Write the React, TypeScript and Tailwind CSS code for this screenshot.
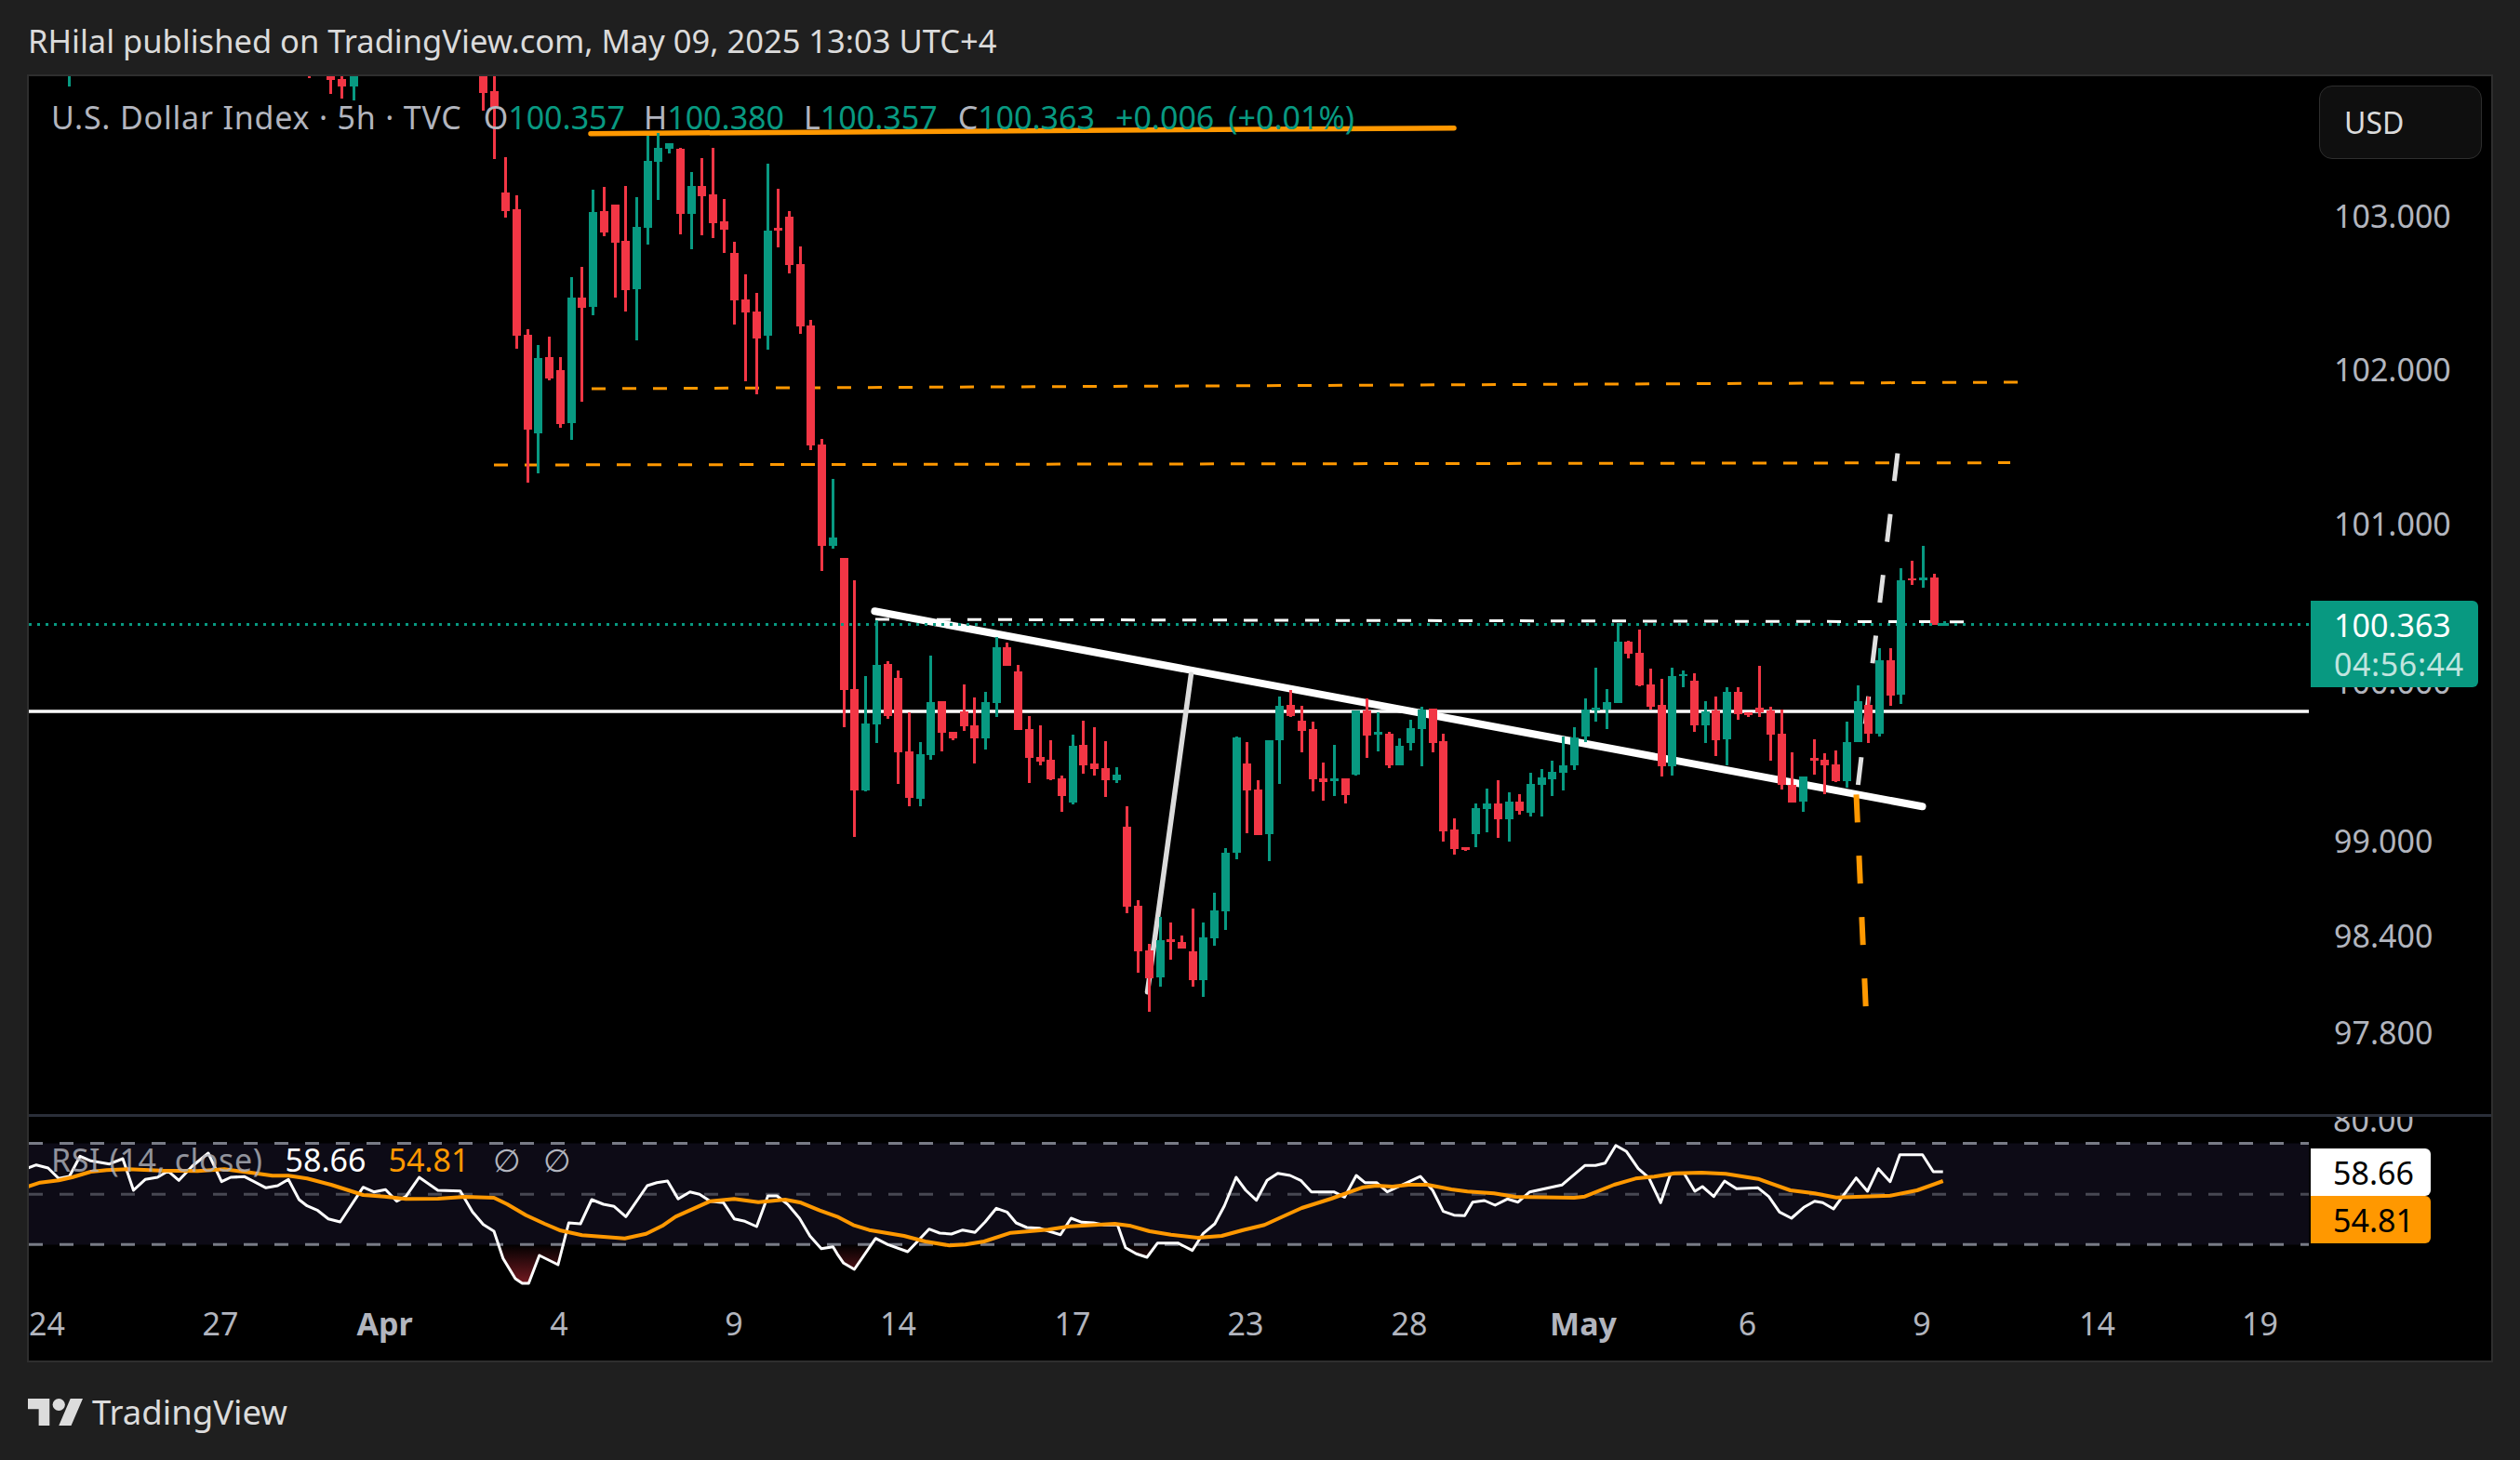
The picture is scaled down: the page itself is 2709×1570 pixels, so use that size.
type Candle = [number, number, number, number, 'r' | 'g'];

const RED = '#f23645';
const TEAL = '#089981';
const ORANGE = '#ff9800';

// cut off at the top of the pane: [x, wick top, wick bottom, body top, body bottom, colour]
const early: [number, number, number, number, number, 'r' | 'g'][] = [
  [74, 70, 93, 70, 70, 'g'],
  [332, 70, 84, 70, 70, 'r'],
  [355, 70, 101, 70, 86, 'r'],
  [367, 70, 106, 85, 93, 'r'],
  [380, 70, 108, 70, 93, 'g'],
  [519, 70, 119, 70, 100, 'r'],
  [531, 70, 171, 98, 115, 'r'],
];

// [wick top, wick bottom, body top, body bottom, colour], one bar every 11.72px from x=543
const candles: Candle[] = [
  [169, 234, 207, 227, 'r'], [210, 375, 225, 361, 'r'], [354, 519, 360, 462, 'r'], [371, 509, 385, 466, 'g'],
  [362, 409, 384, 407, 'r'], [384, 460, 398, 456, 'r'], [298, 473, 320, 455, 'g'], [287, 432, 320, 331, 'r'],
  [204, 339, 228, 330, 'g'], [201, 254, 227, 250, 'r'], [220, 320, 220, 261, 'r'], [200, 335, 259, 312, 'r'],
  [212, 366, 244, 311, 'g'], [146, 263, 173, 245, 'g'], [143, 215, 159, 174, 'g'], [154, 165, 154, 160, 'g'],
  [159, 252, 160, 230, 'r'], [185, 268, 200, 230, 'g'], [170, 253, 200, 211, 'r'], [159, 256, 209, 240, 'r'],
  [214, 272, 238, 247, 'r'], [260, 349, 272, 323, 'r'], [295, 410, 322, 336, 'r'], [315, 424, 335, 364, 'r'],
  [176, 376, 248, 361, 'g'], [203, 266, 245, 248, 'r'], [227, 294, 233, 285, 'r'], [265, 359, 284, 351, 'r'],
  [344, 484, 350, 479, 'r'], [472, 614, 478, 587, 'r'], [515, 590, 578, 587, 'g'], [600, 782, 600, 742, 'r'],
  [624, 900, 741, 850, 'r'], [727, 851, 778, 850, 'g'], [667, 799, 715, 779, 'g'], [711, 773, 714, 770, 'r'],
  [721, 843, 729, 809, 'r'], [766, 867, 808, 858, 'r'], [798, 867, 811, 859, 'g'], [705, 817, 755, 812, 'g'],
  [754, 808, 754, 788, 'r'], [787, 796, 787, 794, 'r'], [736, 786, 765, 781, 'r'], [750, 821, 780, 794, 'r'],
  [744, 806, 755, 794, 'g'], [685, 771, 696, 756, 'g'], [691, 716, 696, 716, 'r'], [715, 785, 722, 785, 'r'],
  [770, 842, 784, 815, 'r'], [780, 823, 814, 819, 'r'], [796, 839, 817, 838, 'r'], [834, 873, 837, 856, 'r'],
  [790, 865, 802, 863, 'g'], [775, 832, 801, 823, 'r'], [782, 834, 821, 827, 'r'], [797, 857, 826, 839, 'r'],
  [825, 842, 833, 839, 'g'], [867, 982, 889, 975, 'r'], [968, 1046, 974, 1023, 'r'], [1015, 1088, 1022, 1052, 'r'],
  [986, 1061, 1011, 1051, 'g'], [992, 1032, 1010, 1013, 'r'], [1006, 1020, 1013, 1020, 'r'], [977, 1061, 1023, 1054, 'r'],
  [992, 1072, 1008, 1054, 'g'], [960, 1017, 979, 1009, 'g'], [912, 1000, 917, 980, 'g'], [792, 924, 793, 917, 'g'],
  [798, 896, 821, 850, 'r'], [839, 898, 849, 898, 'r'], [796, 926, 796, 897, 'g'], [749, 843, 759, 796, 'g'],
  [742, 771, 758, 770, 'r'], [759, 809, 775, 786, 'r'], [776, 851, 784, 838, 'r'], [820, 861, 837, 841, 'r'],
  [801, 856, 837, 840, 'g'], [837, 864, 837, 855, 'r'], [764, 834, 764, 833, 'g'], [751, 815, 764, 791, 'r'],
  [766, 808, 787, 790, 'g'], [787, 826, 789, 823, 'r'], [794, 823, 802, 823, 'g'], [774, 807, 783, 799, 'g'],
  [760, 824, 763, 784, 'g'], [762, 809, 762, 799, 'r'], [789, 905, 797, 894, 'r'], [880, 919, 892, 913, 'r'],
  [911, 915, 911, 914, 'r'], [864, 911, 869, 897, 'g'], [848, 895, 864, 870, 'g'], [839, 901, 864, 881, 'r'],
  [852, 905, 862, 881, 'g'], [854, 876, 862, 872, 'r'], [831, 878, 843, 874, 'g'], [827, 878, 836, 844, 'g'],
  [818, 856, 830, 838, 'g'], [792, 850, 823, 831, 'g'], [782, 828, 793, 823, 'g'], [751, 798, 763, 792, 'g'],
  [718, 776, 761, 764, 'g'], [741, 784, 755, 763, 'g'], [670, 756, 690, 756, 'g'], [689, 708, 690, 703, 'r'],
  [677, 738, 702, 737, 'r'], [719, 763, 736, 760, 'r'], [730, 835, 758, 824, 'r'], [718, 834, 727, 824, 'g'],
  [721, 739, 725, 727, 'g'], [724, 787, 732, 780, 'r'], [754, 799, 765, 780, 'g'], [749, 813, 764, 796, 'r'],
  [739, 823, 744, 795, 'g'], [739, 774, 744, 768, 'r'], [766, 771, 766, 769, 'r'], [716, 771, 761, 766, 'r'],
  [760, 818, 764, 790, 'r'], [763, 849, 789, 844, 'r'], [809, 863, 844, 863, 'r'], [835, 873, 835, 862, 'g'],
  [795, 833, 815, 818, 'r'], [810, 854, 817, 823, 'r'], [807, 841, 822, 840, 'r'], [776, 847, 798, 840, 'g'],
  [737, 798, 754, 798, 'g'], [749, 799, 758, 789, 'r'], [697, 792, 710, 789, 'g'], [697, 759, 710, 748, 'r'],
  [611, 757, 624, 747, 'g'], [603, 629, 622, 624, 'r'], [587, 632, 621, 624, 'g'], [617, 671, 621, 672, 'r'],
  [668, 673, 670, 673, 'g'],
];

// rsi traces, sampled per stretch of the pane
const seg = (pts: number[][], sx: number, ox: number) => pts.map(([x, y]) => [x / sx + ox, y / 3 + 1180]);

const rsi = [
  ...seg([[52,228],[68,218],[90,228],[110,262],[130,255],[150,190],[170,205],[205,215],[230,198],[250,300],[272,265],[295,258],[315,238],[335,268],[360,222],[390,180],[415,272],[432,258],[458,256],[498,292],[520,285],[540,265],[560,330],[575,350],[595,365],[615,392],[637,402],[680,290],[700,305],[722,298],[743,335],[760,320],[785,258],[820,300],[862,302],[885,370],[905,410],[925,432],[942,520],[965,585],[978,600],[990,600],[1010,510],[1045,540],[1065,405],[1087,408],[1108,330],[1130,345],[1150,352],[1172,385],[1212,285],[1230,275],[1250,270],[1270,328],[1292,305],[1310,313],[1330,335],[1355,340],[1375,392],[1395,400],[1417,417],[1438,318],[1455,318],[1475,345],[1497,390],[1517,448],[1538,488],[1560,482]], 1.742, 0),
  ...seg([[0,505],[12,535],[32,555],[72,455],[95,475],[132,498],[172,425],[192,438],[214,441],[235,428],[258,436],[277,402],[298,358],[318,370],[335,405],[355,420],[378,422],[418,443],[438,390],[458,403],[480,405],[500,412],[525,412],[540,485],[560,505],[580,516],[600,470],[638,470],[665,494],[685,440],[707,408],[725,350],[747,258],[765,300],[785,332],[805,268],[825,245],[848,252],[868,268],[888,305],[930,305],[950,322],[972,252],[988,275],[1010,275],[1030,305],[1092,255],[1115,300],[1135,368],[1155,380],[1175,382],[1190,338],[1212,333],[1232,348],[1255,328],[1275,338],[1297,305],[1357,283],[1400,220],[1420,220],[1438,212],[1458,155],[1478,175],[1500,230],[1520,260],[1542,340],[1560,250]], 1.742, 900),
  ...seg([[0,245],[18,245],[38,303],[52,288],[73,320],[93,270],[115,295],[155,292],[175,320],[195,370],[217,390],[240,355],[260,335],[275,340],[295,360],[337,260],[358,303],[378,230],[400,272],[418,185],[460,185],[480,240],[498,240]], 1.725, 1800),
];

const rsiMa = [
  ...seg([[52,288],[75,275],[110,268],[135,258],[170,240],[200,235],[240,232],[300,236],[370,238],[420,232],[470,243],[510,253],[540,253],[575,262],[620,282],[680,315],[720,320],[760,328],[820,327],[870,321],[925,324],[950,345],[985,380],[1020,408],[1050,430],[1090,445],[1130,450],[1170,455],[1210,440],[1240,415],[1265,385],[1300,358],[1330,335],[1375,328],[1420,338],[1470,330],[1500,340],[1535,365]], 1.742, 0),
  ...seg([[0,385],[30,412],[60,428],[125,447],[165,465],[210,478],[240,475],[275,465],[325,437],[395,427],[435,416],[520,408],[550,415],[585,432],[625,443],[675,453],[720,447],[760,428],[800,412],[840,380],[870,357],[925,327],[985,290],[1010,285],[1040,288],[1070,282],[1105,282],[1150,297],[1180,304],[1230,310],[1270,321],[1380,324],[1400,320],[1455,282],[1495,262],[1530,256]], 1.742, 900),
  ...seg([[0,245],[50,243],[95,247],[155,263],[215,300],[260,310],[300,323],[400,317],[450,300],[498,270]], 1.725, 1800),
];

const toPoints = (pts: number[][]) => pts.map(([x, y]) => `${x.toFixed(1)},${y.toFixed(1)}`).join(' ');

const prices = [
  { y: 232, text: '103.000' },
  { y: 397, text: '102.000' },
  { y: 563, text: '101.000' },
  { y: 733, text: '100.000' },
  { y: 904, text: '99.000' },
  { y: 1006, text: '98.400' },
  { y: 1110, text: '97.800' },
];

const dates = [
  { x: 50.5, text: '24' }, { x: 237, text: '27' }, { x: 413.5, text: 'Apr', bold: true }, { x: 601, text: '4' },
  { x: 789, text: '9' }, { x: 965.5, text: '14' }, { x: 1153, text: '17' }, { x: 1339, text: '23' },
  { x: 1515, text: '28' }, { x: 1702, text: 'May', bold: true }, { x: 1878.5, text: '6' }, { x: 2066, text: '9' },
  { x: 2254.5, text: '14' }, { x: 2429.5, text: '19' },
];

function Bar({ x, wt, wb, bt, bb, c }: { x: number; wt: number; wb: number; bt: number; bb: number; c: 'r' | 'g' }) {
  const fill = c === 'r' ? RED : TEAL;
  const px = Math.round(x);
  return (
    <g fill={fill}>
      <rect x={px - 1} y={wt} width={3} height={wb - wt} />
      <rect x={px - 4} y={bt} width={9} height={Math.max(bb - bt, 1)} />
    </g>
  );
}

function PriceChart() {
  return (
    <svg width="2451" height="1116" viewBox="31 82 2451 1116" className="block">
      <line x1="31" y1="765" x2="2482" y2="765" stroke="#fff" strokeWidth="3.5" />
      <line x1="635" y1="143.7" x2="1563" y2="137.7" stroke={ORANGE} strokeWidth="5.5" strokeLinecap="round" />
      <line x1="636" y1="418" x2="2170" y2="411" stroke={ORANGE} strokeWidth="3" strokeDasharray="15 18" />
      <line x1="531" y1="500" x2="2161" y2="497.6" stroke={ORANGE} strokeWidth="3" strokeDasharray="15 18" />
      <line x1="941" y1="666" x2="2111" y2="668.7" stroke="#fff" strokeWidth="3" strokeDasharray="15 18" />
      <line x1="940.4" y1="657.3" x2="2066.5" y2="867.3" stroke="#fff" strokeWidth="8" strokeLinecap="round" />
      <line x1="1280.4" y1="725.3" x2="1233.5" y2="1066.7" stroke="#dcdcdc" strokeWidth="5.5" strokeLinecap="round" />
      <line x1="1997.4" y1="844" x2="2040" y2="487" stroke="#e0e0e0" strokeWidth="5" strokeDasharray="30 35.8" />
      <line x1="1995.5" y1="854.3" x2="2005.7" y2="1082.3" stroke={ORANGE} strokeWidth="6" strokeDasharray="30 36" />
      <g shapeRendering="crispEdges">
        {early.map(([x, wt, wb, bt, bb, c]) => (
          <Bar key={x} x={x} wt={wt} wb={wb} bt={bt} bb={bb} c={c} />
        ))}
        {candles.map(([wt, wb, bt, bb, c], i) => (
          <Bar key={i} x={543.3 + i * 11.72} wt={wt} wb={wb} bt={bt} bb={bb} c={c} />
        ))}
        <line x1="31" y1="671.5" x2="2482" y2="671.5" stroke={TEAL} strokeWidth="3" strokeDasharray="3 6" />
      </g>
    </svg>
  );
}

function RsiChart() {
  return (
    <svg width="2451" height="184" viewBox="31 1201 2451 184" className="block">
      <defs>
        <linearGradient id="oversold" gradientUnits="userSpaceOnUse" x1="0" y1="1338" x2="0" y2="1382">
          <stop offset="0" stopColor={RED} stopOpacity="0" />
          <stop offset="1" stopColor={RED} stopOpacity="0.5" />
        </linearGradient>
        <clipPath id="below30">
          <rect x="31" y="1339" width="2451" height="46" />
        </clipPath>
      </defs>
      <rect x="31" y="1229.5" width="2451" height="109" fill="#0d0b16" />
      <polygon points={toPoints(rsi)} fill="url(#oversold)" clipPath="url(#below30)" />
      <g stroke="#787b86" strokeWidth="3" strokeDasharray="15 18">
        <line x1="31" y1="1229.5" x2="2482" y2="1229.5" />
        <line x1="31" y1="1284.3" x2="2482" y2="1284.3" strokeOpacity="0.55" />
        <line x1="31" y1="1338.3" x2="2482" y2="1338.3" />
      </g>
      <polyline points={toPoints(rsi)} fill="none" stroke="#fff" strokeWidth="3" strokeLinejoin="round" />
      <polyline points={toPoints(rsiMa)} fill="none" stroke={ORANGE} strokeWidth="4" strokeLinejoin="round" />
    </svg>
  );
}

export default function App() {
  return (
    <div className="flex h-[1570px] w-[2709px] flex-col bg-[#1f1f1f] font-['Noto_Sans',sans-serif] text-[34px] leading-none text-[#b2b5be]">
      <header className="flex h-[80px] shrink-0 items-center pl-[30px] pt-[8px] text-[34.5px] text-[#dbdbdb]">
        RHilal published on TradingView.com, May 09, 2025 13:03 UTC+4
      </header>

      <main className="mx-[29px] flex h-[1385px] shrink-0 flex-col overflow-hidden border-2 border-[#2e2e2e] bg-black">
        <section className="flex h-[1116px] shrink-0">
          <div className="relative w-[2451px] shrink-0">
            <PriceChart />
            <div className="absolute left-[24px] top-[27px] flex items-center whitespace-nowrap">
              <span className="tracking-[0.8px]">U.S. Dollar Index · 5h · TVC</span>
              <span className="ml-[23px]">O</span>
              <span className="text-[#089981]">100.357</span>
              <span className="ml-[20px]">H</span>
              <span className="text-[#089981]">100.380</span>
              <span className="ml-[21px]">L</span>
              <span className="text-[#089981]">100.357</span>
              <span className="ml-[22px]">C</span>
              <span className="text-[#089981]">100.363</span>
              <span className="ml-[22px] text-[#089981]">+0.006</span>
              <span className="ml-[15px] text-[#089981]">(+0.01%)</span>
            </div>
          </div>
          <div className="relative flex-1">
            {prices.map(p => (
              <span key={p.text} className="absolute left-[27px] -translate-y-1/2" style={{ top: p.y - 82 }}>
                {p.text}
              </span>
            ))}
            <button className="absolute left-[11px] top-[10px] flex h-[79px] w-[175px] items-center rounded-[14px] border border-[#2e2e2e] bg-[#0f0f0f] pl-[26px] text-[32px] text-[#dbdbdb]">
              USD
            </button>
            <div className="absolute left-[2px] top-[564px] flex h-[93px] w-[180px] flex-col items-start gap-[8px] rounded-r-[6px] bg-[#089981] pl-[25px] pt-[9px] text-white">
              <span>100.363</span>
              <span className="tracking-[0.6px] text-white/75">04:56:44</span>
            </div>
          </div>
        </section>

        <section className="flex h-[187px] shrink-0 border-t-[3px] border-[#2a2e39]">
          <div className="relative w-[2451px] shrink-0">
            <RsiChart />
            <div className="absolute left-[24px] top-[29px] flex items-center whitespace-nowrap">
              <span className="tracking-[0.6px] opacity-80">RSI (14, close)</span>
              <span className="ml-[24px] text-white">58.66</span>
              <span className="ml-[24px] text-[#ff9800]">54.81</span>
              <span className="ml-[26px]">∅</span>
              <span className="ml-[24px]">∅</span>
            </div>
          </div>
          <div className="relative flex-1 overflow-hidden">
            <span className="absolute left-[26px] top-[-14px]">80.00</span>
            <div className="absolute left-[2px] top-[34px] flex w-[129px] flex-col text-black">
              <span className="flex h-[51px] items-center rounded-r-[6px] bg-white pl-[24px]">58.66</span>
              <span className="flex h-[51px] items-center rounded-r-[6px] bg-[#ff9800] pl-[24px]">54.81</span>
            </div>
          </div>
        </section>

        <section className="relative flex-1">
          {dates.map(d => (
            <span
              key={d.x}
              className={d.bold ? 'absolute top-[21px] -translate-x-1/2 font-bold' : 'absolute top-[21px] -translate-x-1/2'}
              style={{ left: d.x - 31 }}
            >
              {d.text}
            </span>
          ))}
        </section>
      </main>

      <footer className="flex flex-1 items-center gap-[10px] pl-[30px] pt-[1px] text-[36.5px] text-[#dcdcdc]">
        <svg width="59" height="29" viewBox="0 4 35.5 18" preserveAspectRatio="none" fill="#dcdcdc" aria-hidden>
          <path d="M14 22H7V11H0V4h14v18zM28 22h-8l7.5-18h8L28 22z" />
          <circle cx="20" cy="8" r="4" />
        </svg>
        <span>TradingView</span>
      </footer>
    </div>
  );
}
